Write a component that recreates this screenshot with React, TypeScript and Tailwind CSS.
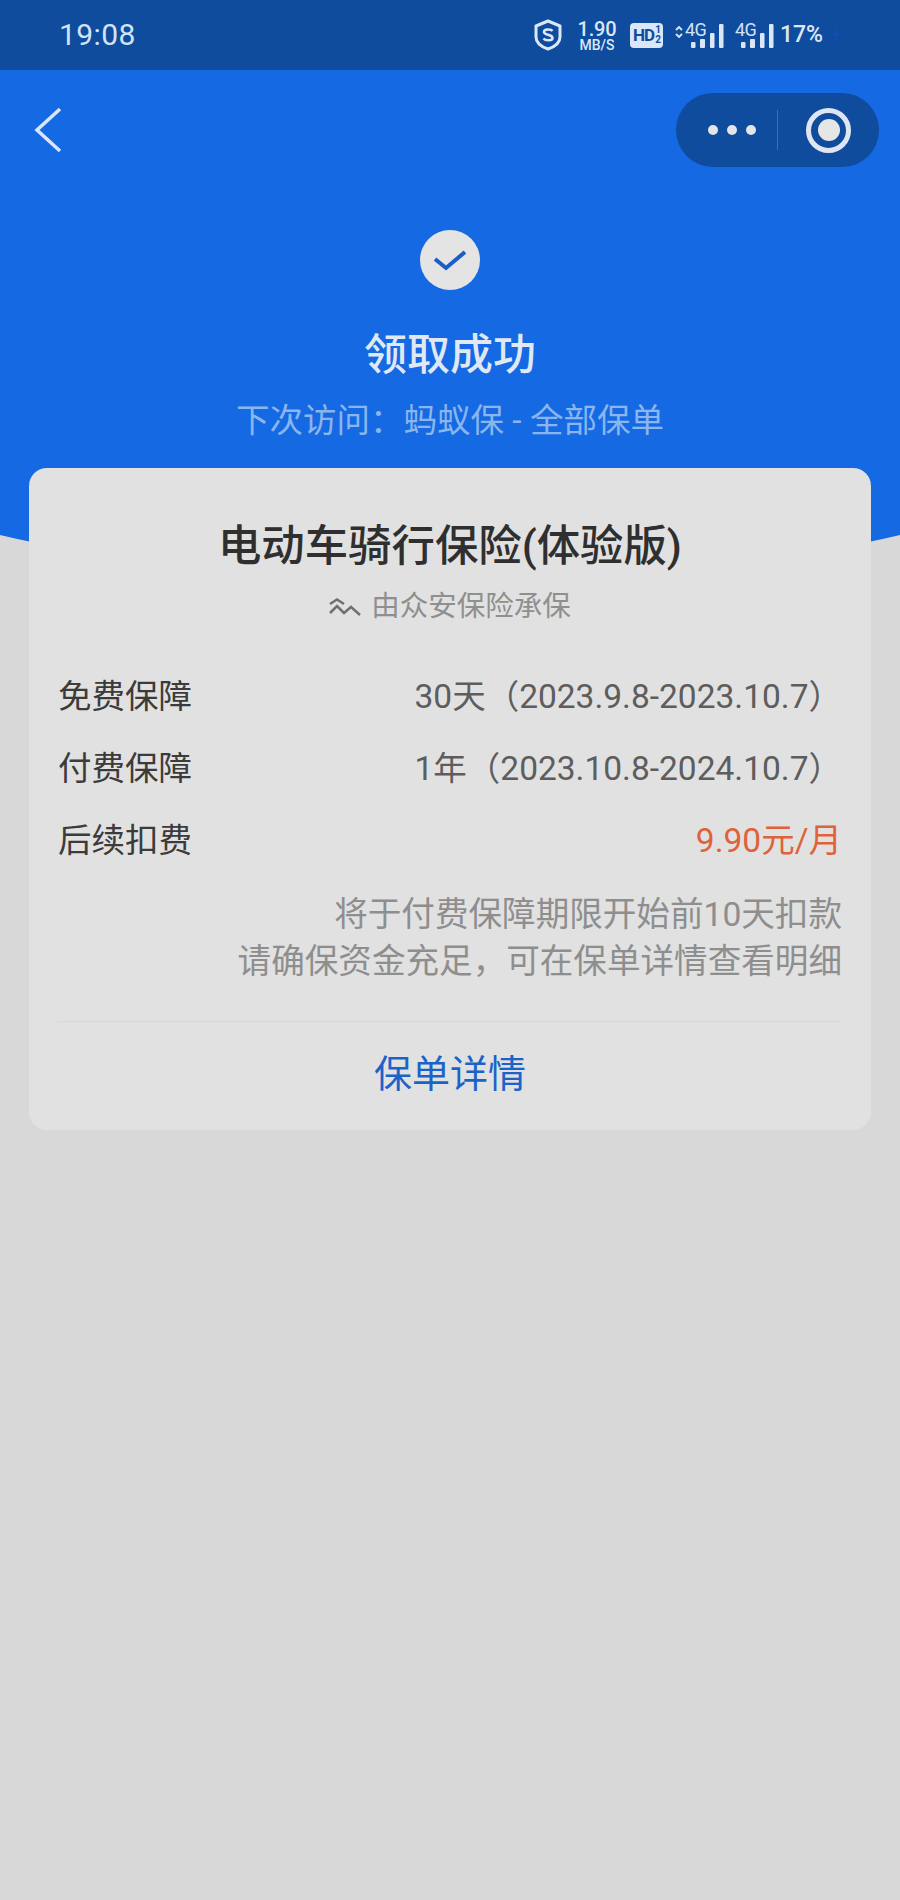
const SANS = "font-['Roboto','Noto_Sans_CJK_SC',sans-serif]";

function Signal() {
  return (
    <div className="relative h-[30px] w-[36px]">
      <span className="absolute left-[-3px] top-[0px] text-[18px] leading-[20px] tracking-[-0.5px] text-[#d3e3f6] font-['Roboto',sans-serif]">4G</span>
      <svg className="absolute left-0 top-0" width="36" height="30" viewBox="0 0 36 30" fill="#dbe7f7">
        <rect x="3" y="22" width="4.500" height="6" rx="1" />
        <rect x="12" y="19" width="5" height="9" rx="1" />
        <rect x="22" y="13" width="4.500" height="15" rx="1" />
        <rect x="31" y="4" width="4.500" height="24" rx="1" />
      </svg>
    </div>
  );
}

function StatusBar() {
  return (
    <div className="relative z-10 flex h-[70px] items-center justify-between bg-[#0f4c9e] pl-[59px] pr-[60px] text-[#d3e3f6]">
      <span className="text-[30px] leading-[34px] font-['Roboto',sans-serif] tracking-[0.4px]">19:08</span>
      <div className="flex items-center">
        <svg width="28" height="32" viewBox="0 0 28 32" fill="none" stroke="#dbe7f7" strokeWidth="3">
          <path d="M14 2 L26 7 V18 C26 24 20 28 14 30 C8 28 2 24 2 18 V7 Z" strokeLinejoin="round" />
          <path d="M18.500 12 C17 9.800 10 9.800 10 13 C10 16.500 18.500 15 18.500 19 C18.500 22 11.500 22 9.500 19.500" strokeWidth="2.600" />
        </svg>
        <div className="ml-[16px] flex w-[38px] flex-col items-center font-['Roboto',sans-serif] text-[#dbe7f7]">
          <span className="text-[20px] leading-[20px] font-medium tracking-[-0.2px]">1.90</span>
          <span className="text-[14px] leading-[13px] font-medium">MB/S</span>
        </div>
        <div className="ml-[14px] flex h-[25px] w-[33px] items-center rounded-[4px] bg-[#dbe7f7] pl-[3px] font-['Roboto',sans-serif] font-bold text-[#0f4c9e]">
          <span className="text-[17px] leading-[20px] tracking-[-0.8px]">HD</span>
          <span className="ml-[1px] flex flex-col items-center text-[10px] leading-[10px]">
            <span>1</span>
            <span>2</span>
          </span>
        </div>
        <svg className="ml-[12px] mb-[6px]" width="8" height="14" viewBox="0 0 8 14" fill="none" stroke="#dbe7f7" strokeWidth="1.800">
          <path d="M1 5 L4 2 L7 5 M1 9 L4 12 L7 9" />
        </svg>
        <div className="ml-[5px]">
          <Signal />
        </div>
        <div className="ml-[14px]">
          <Signal />
        </div>
        <span className="ml-[6px] text-[23px] leading-[30px] font-medium text-[#dbe7f7] font-['Roboto',sans-serif]">17%</span>
        <svg className="ml-[9px]" width="8" height="20" viewBox="0 0 8 20" fill="#134fb0">
          <path d="M6 0 L1 11 H4 L2 20 L7.500 8 H4.500 Z" />
        </svg>
      </div>
    </div>
  );
}

function NavBar() {
  return (
    <div className="flex h-[120px] items-center justify-between pl-[34px] pr-[21px]">
      <svg width="28" height="46" viewBox="0 0 28 46" fill="none" stroke="#d8e7fb" strokeWidth="3.500">
        <path d="M26 2 L3 23 L26 44" />
      </svg>
      <div className="flex h-[74px] w-[203px] items-center rounded-full bg-[#0f4c9e] pl-[32px]">
        <div className="flex w-[48px] justify-between">
          <span className="h-[10px] w-[10px] rounded-full bg-[#e3e5e8]" />
          <span className="h-[10px] w-[10px] rounded-full bg-[#e3e5e8]" />
          <span className="h-[10px] w-[10px] rounded-full bg-[#e3e5e8]" />
        </div>
        <div className="ml-[21px] h-[40px] w-[1px] bg-[#3a70b8]" />
        <div className="ml-[28px] flex h-[45px] w-[45px] items-center justify-center rounded-full border-[5px] border-[#dfe6ef]">
          <span className="h-[22px] w-[22px] rounded-full bg-[#e6e6e6]" />
        </div>
      </div>
    </div>
  );
}

function Hero() {
  return (
    <div className="relative h-[398px] bg-[#1569e3]">
      <div className="absolute left-[-200px] top-[348px] h-[162px] w-[1300px] rounded-b-[650px_162px] bg-[#1569e3]" />
      <div className="relative">
        <NavBar />
        <div className="mt-[40px] flex flex-col items-center">
          <div className="flex h-[60px] w-[60px] items-center justify-center rounded-full bg-[#e4e4e4]">
            <svg width="32" height="21" viewBox="0 0 32 21" fill="none" stroke="#1a5fc4" strokeWidth="4">
              <path d="M1 9 L12 18 L31 2" />
            </svg>
          </div>
          <div className="mt-[35px] text-[43px] leading-[60px] font-medium text-[#dfe8f3]">领取成功</div>
          <div className="mt-[14px] text-[33.500px] leading-[44px] text-[#8ab5ee]">下次访问：蚂蚁保 - 全部保单</div>
        </div>
      </div>
    </div>
  );
}

function Row({ label, value, tone }: { label: string; value: string; tone?: string }) {
  return (
    <div className="flex h-[72px] items-center justify-between">
      <span className="text-[33.500px] text-[#3b3b3b]">{label}</span>
      <span className={`text-[33.500px] ${tone ?? "text-[#5d5d5d]"}`}>{value}</span>
    </div>
  );
}

function Card() {
  return (
    <div className="relative mx-[29px] flex h-[662px] flex-col rounded-[18px] bg-[#e1e1e1] px-[29px]">
      <div className="mt-[49px] text-center text-[43.400px] leading-[60px] font-medium text-[#2f2f2f]">电动车骑行保险(体验版)</div>
      <div className="mt-[6px] flex h-[48px] items-center justify-center text-[28.500px] text-[#8f8f8f]">
        <svg className="mr-[10px]" width="32" height="18" viewBox="0 0 32 18" fill="none" stroke="#707070" strokeWidth="2.500">
          <path d="M1 6 L8 1.500 L15 6" />
          <path d="M1 15 L8 8 L15 15 L22 9 L31 17" />
        </svg>
        由众安保险承保
      </div>
      <div className="mt-[30px]">
        <Row label="免费保障" value="30天（2023.9.8-2023.10.7）" />
        <Row label="付费保障" value="1年（2023.10.8-2024.10.7）" />
        <Row label="后续扣费" value="9.90元/月" tone="text-[#e0623a]" />
      </div>
      <div className="mt-[14px] text-right text-[33.600px] leading-[47px] text-[#8e8e8e]">
        <div>将于付费保障期限开始前10天扣款</div>
        <div>请确保资金充足，可在保单详情查看明细</div>
      </div>
      <div className="mt-[36px] h-[1px] bg-[#d8d8d8]" />
      <div className="flex flex-1 items-center justify-center pb-[4px] text-[38px] text-[#1b63c8]">保单详情</div>
    </div>
  );
}

export default function App() {
  return (
    <div className={`relative h-[1900px] w-[900px] overflow-hidden bg-[#d8d8d8] ${SANS}`}>
      <StatusBar />
      <Hero />
      <Card />
    </div>
  );
}
